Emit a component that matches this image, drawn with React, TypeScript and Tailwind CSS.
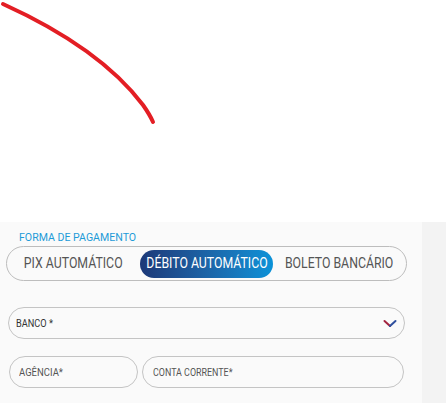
const font = { fontFamily: 'Roboto, "Liberation Sans", sans-serif' };

function Chevron() {
    return (
        <svg width="14" height="9" viewBox="0 0 14 9" className="shrink-0">
            <path d="M1.5 2 L7 7" stroke="#a32440" strokeWidth="2" strokeLinecap="round" />
            <path d="M7 7 L12.5 2" stroke="#2f4f9e" strokeWidth="2" strokeLinecap="round" />
        </svg>
    );
}

export default function App() {
    const tabs = ["PIX AUTOMÁTICO", "DÉBITO AUTOMÁTICO", "BOLETO BANCÁRIO"];
    const active = 1;

    return (
        <div className="w-[446px] h-[403px] overflow-hidden flex flex-col bg-white" style={font}>
            <div className="h-[222px] shrink-0">
                <svg width="200" height="140" viewBox="0 0 200 140">
                    <path d="M3 4 Q100 48 143 105 Q150 115 153 122" fill="none" stroke="#e31e24" strokeWidth="4" strokeLinecap="round" />
                </svg>
            </div>

            <div className="flex flex-1">
                <div className="w-[422px] bg-[#fafafa] pt-[8px]">
                    <p className="pl-[19px] text-[11.5px] leading-[14px] text-[#1d9bd8] whitespace-nowrap">
                        <span className="inline-block origin-left scale-x-[0.92]">FORMA DE PAGAMENTO</span>
                    </p>

                    <div className="ml-[6px] mt-[2px] w-[401px] h-[35px] rounded-full border border-[#bdbdbd] flex items-center">
                        {tabs.map((t, i) => (
                            <div
                                key={t}
                                className={`w-[133px] h-[28px] rounded-full flex items-center justify-center text-[15px] whitespace-nowrap ${
                                    i === active ? "bg-gradient-to-r from-[#1c3978] to-[#0a92d8] text-white" : "text-[#555555]"
                                }`}
                            >
                                <span className="inline-block scale-x-[0.82]">{t}</span>
                            </div>
                        ))}
                    </div>

                    <div className="ml-[8px] mt-[26px] w-[397px] h-[32px] rounded-full border border-[#c4c4c4] flex items-center justify-between pl-[7px] pr-[7px]">
                        <span className="inline-block origin-left scale-x-[0.92] text-[10px] text-[#333333] whitespace-nowrap">BANCO *</span>
                        <Chevron />
                    </div>

                    <div className="flex gap-[4px] ml-[9px] mt-[17px]">
                        <div className="w-[129px] h-[32px] rounded-full border border-[#c4c4c4] flex items-center pl-[9px]">
                            <span className="inline-block origin-left scale-x-[0.95] text-[10px] text-[#555555] whitespace-nowrap">AGÊNCIA*</span>
                        </div>
                        <div className="w-[262px] h-[32px] rounded-full border border-[#c4c4c4] flex items-center pl-[10px]">
                            <span className="inline-block origin-left scale-x-[0.89] text-[10px] text-[#555555] whitespace-nowrap">CONTA CORRENTE*</span>
                        </div>
                    </div>
                </div>
                <div className="flex-1 bg-[#f3f3f3]" />
            </div>
        </div>
    );
}
